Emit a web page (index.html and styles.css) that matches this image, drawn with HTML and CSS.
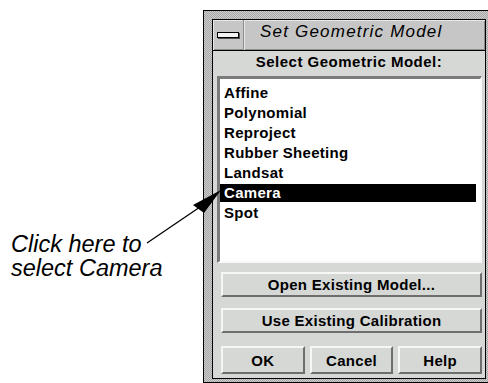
FILE: index.html
```html
<!DOCTYPE html>
<html>
  <head>
    <meta charset="utf-8">
    <link rel="stylesheet" href="styles.css">
    <title>Set Geometric Model</title>
  </head>
  <body>
    <div class="page">
      <div class="callout">
        <p class="note">Click here to<br>select Camera</p>
      </div>
      <div class="window">
        <div class="frame">
          <div class="titlebar">
            <div class="menu-btn"><span class="menu-bar"></span></div>
            <div class="title">Set Geometric Model</div>
          </div>
          <div class="client">
            <div class="label">Select Geometric Model:</div>
            <ul class="list">
              <li>Affine</li>
              <li>Polynomial</li>
              <li>Reproject</li>
              <li>Rubber Sheeting</li>
              <li>Landsat</li>
              <li class="selected">Camera</li>
              <li>Spot</li>
            </ul>
            <button class="btn wide">Open Existing Model...</button>
            <button class="btn wide second">Use Existing Calibration</button>
            <div class="row">
              <button class="btn">OK</button>
              <button class="btn">Cancel</button>
              <button class="btn">Help</button>
            </div>
          </div>
        </div>
      </div>
      <svg class="arrow" width="488" height="383" viewBox="0 0 488 383">
        <line x1="147" y1="243" x2="200" y2="207" stroke="#000" stroke-width="1.3"/>
        <polygon points="221,190 193,205 204,213" fill="#000"/>
      </svg>
    </div>
  </body>
</html>
```

FILE: styles.css
```css
html, body {
    margin: 0; padding: 0; background: #fff;
}
.page {
    position: relative; display: flex;
    width: 488px; height: 383px; overflow: hidden;
}
.callout {
    flex-shrink: 0; width: 203px; box-sizing: border-box;
    padding: 232px 0 0 11px;
}
.note {
    margin: 0; font-family: "Liberation Sans", Arial, sans-serif;
    font-style: italic; font-size: 23.5px; line-height: 24px; color: #000;
}
.window {
    flex-shrink: 0; width: 292px; box-sizing: border-box;
    margin-top: 10px; padding: 8px;
    border: 1px solid #000;
    background: repeating-conic-gradient(#a4a4a4 0 25%, #cfcfcf 0 50%) 0 0 / 2px 2px;
}
.frame {
    width: 274px; box-sizing: border-box; border: 1px solid #000;
}
.titlebar {
    display: flex; height: 30px;
    border-bottom: 1px solid #000; background: #c6c6c6;
    box-shadow: inset 1px 1px #e8e8e8, inset -1px -1px #8c8c8c;
}
.menu-btn {
    width: 30px; display: flex; align-items: center; justify-content: center;
    border-right: 1px solid #8c8c8c; box-shadow: 1px 0 #e8e8e8;
}
.menu-bar {
    width: 20px; height: 4px; border: 1px solid #000;
    background: #f2f2f2; box-shadow: 1px 1px #505050;
}
.title {
    padding-left: 16px; line-height: 24px;
    font-family: "Liberation Sans", Arial, sans-serif;
    font-style: italic; font-size: 17px; letter-spacing: 1.2px; color: #000;
}
.client {
    background: #d6d8d6; padding-bottom: 4px;
    font-family: "Liberation Sans", Arial, sans-serif;
    font-weight: bold; font-size: 15px; color: #000;
}
.label {
    height: 22px; line-height: 22px; text-align: center; letter-spacing: 0.5px;
}
.list {
    list-style: none; margin: 3px 3px 0 4px; padding: 5px 4px 0 0;
    height: 187px; box-sizing: border-box; background: #fff;
    border-style: solid; border-width: 3px 2px 2px 3px;
    border-color: #7b7b7b #f8f8f8 #f8f8f8 #7b7b7b;
    letter-spacing: 0.3px;
}
.list li {
    height: 18px; line-height: 18px; margin-bottom: 2px; padding-left: 4px;
}
.list li.selected {
    background: #000; color: #fff;
}
.btn {
    display: block; box-sizing: border-box; margin: 0; padding: 0;
    font: inherit; letter-spacing: 0.3px; color: #000;
    background: #d6d8d6; border: 2px solid;
    border-color: #f6f6f6 #6e6e6e #6e6e6e #f6f6f6;
}
.btn.wide {
    width: 261px; height: 25px; margin: 9px 0 0 8px;
}
.btn.second {
    margin-top: 11px;
}
.row {
    display: flex; gap: 5px; width: 261px; margin: 13px 0 0 8px;
}
.row .btn {
    flex: 1; height: 28px;
}
.arrow {
    position: absolute; left: 0; top: 0; pointer-events: none;
}
```
